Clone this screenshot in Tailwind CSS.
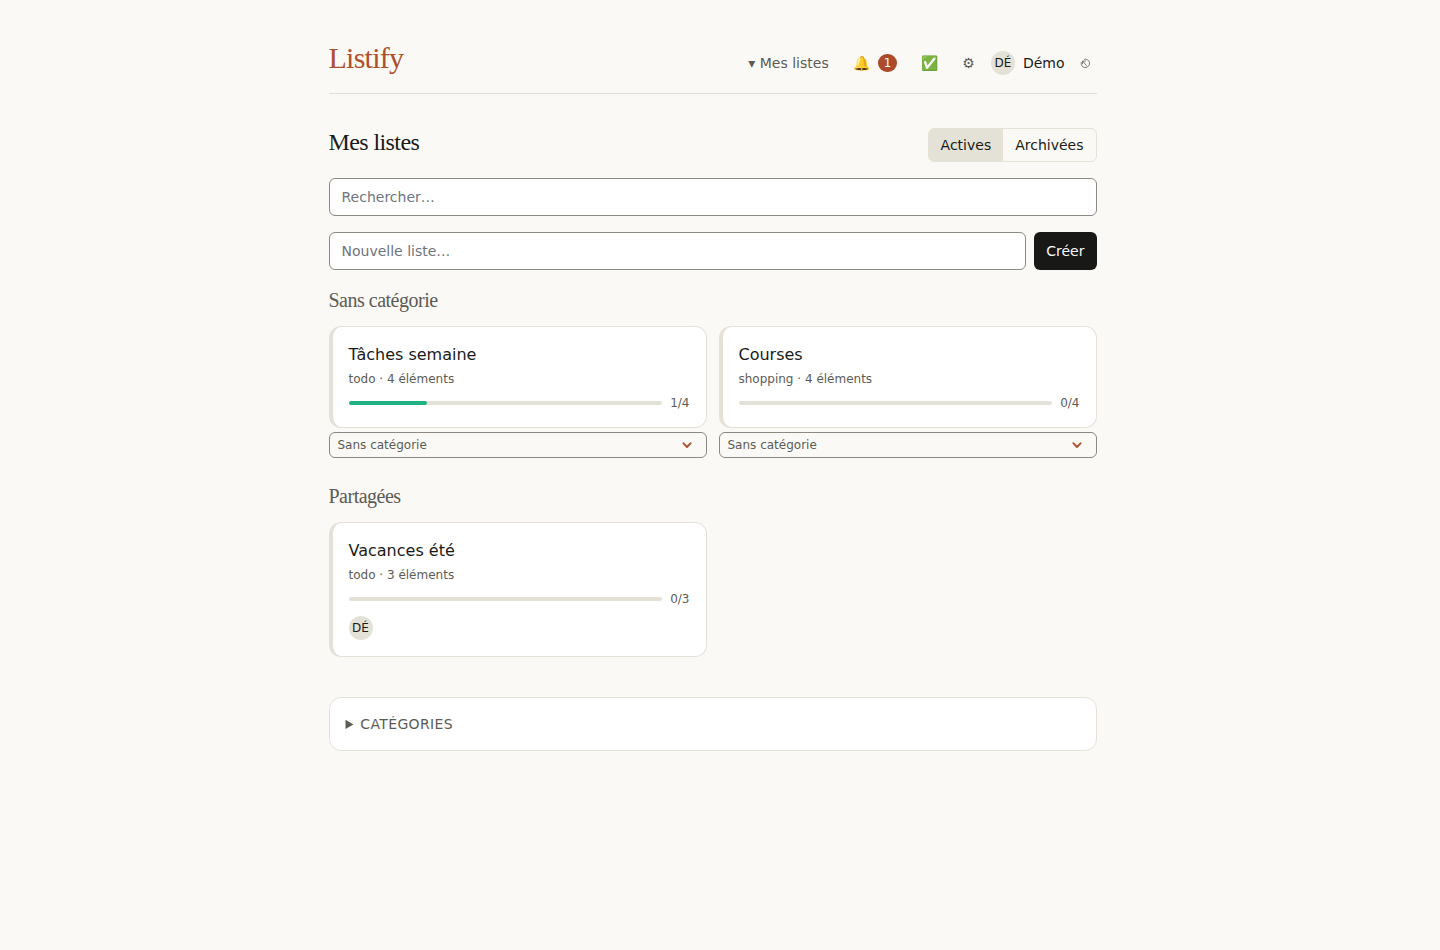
<!DOCTYPE html>
<html lang="fr">
<head>
<meta charset="utf-8">
<meta name="viewport" content="width=device-width, initial-scale=1">
<title>Listify</title>
<script src="https://cdn.jsdelivr.net/npm/@tailwindcss/browser@4"></script>
</head>
<body class="min-h-screen bg-[#faf9f5] pr-[15px] font-['DejaVu_Sans',sans-serif] text-sm text-[#1a1a18]">
<div class="mx-auto max-w-3xl py-10">
  <header class="mb-8 flex items-baseline justify-between border-b border-[#dfded8] pb-[17px]">
    <a href="#" class="font-['Liberation_Serif',serif] text-3xl tracking-tight text-[#ae4f2d]">Listify</a>
    <nav class="flex items-center text-[#5c5b56]">
      <a href="#" class="px-3">▾ Mes listes</a>
      <a href="#" class="flex items-center gap-2 px-3" aria-label="Notifications, 1 non lue"><span>🔔</span><span class="rounded-full bg-[#ab4b2b] px-1.5 py-px text-xs text-white">1</span></a>
      <a href="#" class="px-3" aria-label="Tâches">✅</a>
      <a href="#" class="px-3" aria-label="Réglages">⚙</a>
      <a href="#" class="ml-1 flex items-center gap-2 text-[#1a1a18]"><span class="flex size-6 items-center justify-center rounded-full bg-[#e4e2d6] text-xs">DÉ</span>Démo</a>
      <button type="button" class="ml-2 px-1.5" aria-label="Se déconnecter">
        <svg class="block size-3" viewBox="0 0 12 12" fill="none" stroke="currentColor" stroke-width="0.8"><path d="M5.200 2.300A4.200 4.200 0 1 1 2.300 5.200"/><path d="M7.800 8.800 3.600 4.200M3.500 7V4.100H7"/></svg>
      </button>
    </nav>
  </header>

  <main>
    <div class="mb-4 flex items-baseline justify-between">
      <h1 class="font-['Liberation_Serif',serif] text-2xl tracking-tight">Mes listes</h1>
      <div class="flex overflow-hidden rounded-md border border-[#e4e2d6]">
        <button type="button" aria-pressed="true" class="bg-[#e4e2d6] px-3 py-1.5">Actives</button>
        <button type="button" aria-pressed="false" class="px-3 py-1.5">Archivées</button>
      </div>
    </div>

    <input type="search" aria-label="Rechercher" placeholder="Rechercher…" class="mb-4 block w-full rounded-md border border-[#8a8982] bg-white px-3 py-2 placeholder:text-[#6f747d]">
    <form class="mb-4 flex gap-2">
      <input type="text" aria-label="Nouvelle liste" placeholder="Nouvelle liste…" class="min-w-0 flex-1 rounded-md border border-[#8a8982] bg-white px-3 py-2 placeholder:text-[#6f747d]">
      <button type="submit" class="rounded-md bg-[#181817] px-3 py-2 text-[#faf9f5]">Créer</button>
    </form>

    <section class="mb-6">
      <h2 class="mb-3 font-['Liberation_Serif',serif] text-xl tracking-tight text-[#5c5b56]">Sans catégorie</h2>
      <div class="grid grid-cols-2 gap-3">
        <div>
          <a href="#" class="block rounded-xl border border-l-4 border-[#e4e2d6] bg-white p-4">
            <h3 class="text-base">Tâches semaine</h3>
            <p class="mt-1 text-xs text-[#5c5b56]">todo · 4 éléments</p>
            <div class="mt-2 flex items-center gap-2 text-xs text-[#5c5b56]">
              <div class="h-1 flex-1 rounded-full bg-[#e4e2d6]"><div class="h-1 rounded-full bg-[#20b183]" style="width:25%"></div></div>
              <span>1/4</span>
            </div>
          </a>
          <div class="relative mt-1 text-xs text-[#5c5b56]">
            <select aria-label="Catégorie de Tâches semaine" class="block w-full appearance-none rounded-md border border-[#8a8982] px-2 py-1"><option>Sans catégorie</option></select>
            <svg class="pointer-events-none absolute top-2 right-3.5 size-3" viewBox="0 0 12 12" fill="none" stroke="#ae4f2d" stroke-width="1.800" stroke-linecap="round" stroke-linejoin="round"><path d="M2.300 3.200 6 7l3.700-3.800"/></svg>
          </div>
        </div>
        <div>
          <a href="#" class="block rounded-xl border border-l-4 border-[#e4e2d6] bg-white p-4">
            <h3 class="text-base">Courses</h3>
            <p class="mt-1 text-xs text-[#5c5b56]">shopping · 4 éléments</p>
            <div class="mt-2 flex items-center gap-2 text-xs text-[#5c5b56]">
              <div class="h-1 flex-1 rounded-full bg-[#e4e2d6]"></div>
              <span>0/4</span>
            </div>
          </a>
          <div class="relative mt-1 text-xs text-[#5c5b56]">
            <select aria-label="Catégorie de Courses" class="block w-full appearance-none rounded-md border border-[#8a8982] px-2 py-1"><option>Sans catégorie</option></select>
            <svg class="pointer-events-none absolute top-2 right-3.5 size-3" viewBox="0 0 12 12" fill="none" stroke="#ae4f2d" stroke-width="1.800" stroke-linecap="round" stroke-linejoin="round"><path d="M2.300 3.200 6 7l3.700-3.800"/></svg>
          </div>
        </div>
      </div>
    </section>

    <section class="mb-10">
      <h2 class="mb-3 font-['Liberation_Serif',serif] text-xl tracking-tight text-[#5c5b56]">Partagées</h2>
      <div class="grid grid-cols-2 gap-3">
        <a href="#" class="block rounded-xl border border-l-4 border-[#e4e2d6] bg-white p-4">
          <h3 class="text-base">Vacances été</h3>
          <p class="mt-1 text-xs text-[#5c5b56]">todo · 3 éléments</p>
          <div class="mt-2 flex items-center gap-2 text-xs text-[#5c5b56]">
            <div class="h-1 flex-1 rounded-full bg-[#e4e2d6]"></div>
            <span>0/3</span>
          </div>
          <div class="mt-[9px] flex"><span class="flex size-6 items-center justify-center rounded-full bg-[#e4e2d6] text-xs">DÉ</span></div>
        </a>
      </div>
    </section>

    <details class="rounded-xl border border-[#e4e2d6] bg-white p-4">
      <summary class="tracking-wide text-[#5c5b56] uppercase">Catégories</summary>
    </details>
  </main>
</div>
</body>
</html>
